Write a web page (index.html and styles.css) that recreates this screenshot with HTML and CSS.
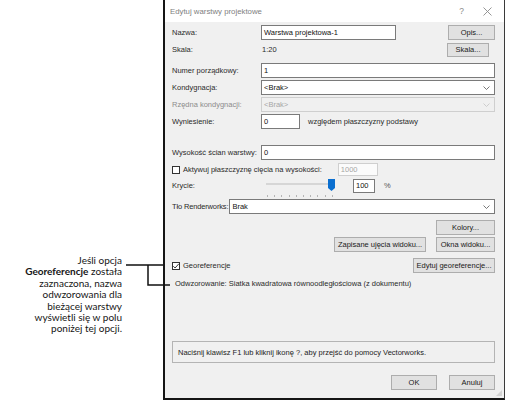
FILE: index.html
```html
<!DOCTYPE html>
<html lang="pl">
<head>
<meta charset="utf-8">
<title>Edytuj warstwy projektowe</title>
<link rel="stylesheet" href="styles.css">
</head>
<body>
<div class="page">
  <aside class="note">
    <p>Jeśli opcja<br><b>Georeferencje</b> została<br>zaznaczona, nazwa<br>odwzorowania dla<br>bieżącej warstwy<br>wyświetli się w polu<br>poniżej tej opcji.</p>
  </aside>

  <section class="dialog">
    <header class="titlebar">
      <span class="title">Edytuj warstwy projektowe</span>
      <span class="tb-help">?</span>
      <svg class="tb-close" width="9" height="9" viewBox="0 0 9 9"><path d="M0.5 0.5L8.5 8.5M8.5 0.5L0.5 8.5" stroke="#8a8a8a" stroke-width="0.9" fill="none"/></svg>
    </header>

    <div class="body">
      <div class="row r-nazwa">
        <span class="label">Nazwa:</span>
        <span class="input w-nazwa">Warstwa projektowa-1</span>
        <span class="btn b-opis">Opis...</span>
      </div>
      <div class="row r-skala">
        <span class="label">Skala:</span>
        <span class="value">1:20</span>
        <span class="btn b-skala">Skala...</span>
      </div>
      <div class="row r-numer">
        <span class="label">Numer porządkowy:</span>
        <span class="input grow">1</span>
      </div>
      <div class="row r-gap2">
        <span class="label">Kondygnacja:</span>
        <span class="input select grow">&lt;Brak&gt;<svg class="chev" width="7" height="4" viewBox="0 0 7 4"><path d="M0.5 0.5L3.5 3.5L6.5 0.5" stroke="#555" stroke-width="0.8" fill="none"/></svg></span>
      </div>
      <div class="row r-gap2 disabled">
        <span class="label">Rzędna kondygnacji:</span>
        <span class="input select off grow">&lt;Brak&gt;<svg class="chev" width="7" height="4" viewBox="0 0 7 4"><path d="M0.5 0.5L3.5 3.5L6.5 0.5" stroke="#c4c4c4" stroke-width="0.8" fill="none"/></svg></span>
      </div>
      <div class="row r-gap2">
        <span class="label">Wyniesienie:</span>
        <span class="input w-wyn">0</span>
        <span class="after">względem płaszczyzny podstawy</span>
      </div>

      <div class="row r-wys">
        <span class="label">Wysokość ścian warstwy:</span>
        <span class="input grow">0</span>
      </div>
      <div class="row r-gap2">
        <span class="check"></span>
        <span class="check-text">Aktywuj płaszczyznę cięcia na wysokości:</span>
        <span class="input off w-ciecie">1000</span>
      </div>
      <div class="row r-krycie">
        <span class="label">Krycie:</span>
        <span class="slider">
          <span class="track"></span>
          <span class="thumb"></span>
          <span class="ticks"></span>
        </span>
        <span class="input w-proc">100</span>
        <span class="pct">%</span>
      </div>
      <div class="row r-gap6">
        <span class="label l-tlo">Tło Renderworks:</span>
        <span class="input select grow">Brak<svg class="chev" width="7" height="4" viewBox="0 0 7 4"><path d="M0.5 0.5L3.5 3.5L6.5 0.5" stroke="#555" stroke-width="0.8" fill="none"/></svg></span>
      </div>
      <div class="row r-gap6 end">
        <span class="btn b-kolory">Kolory...</span>
      </div>
      <div class="row r-gap2 end">
        <span class="btn b-zapis">Zapisane ujęcia widoku...</span>
        <span class="btn b-kolory">Okna widoku...</span>
      </div>
      <div class="row r-gap6">
        <span class="check on"><svg width="8" height="8" viewBox="0 0 8 8"><path d="M1.3 4.2L3.1 6L6.8 1.8" stroke="#222" stroke-width="0.9" fill="none"/></svg></span>
        <span class="check-text">Georeferencje</span>
        <span class="btn b-edytuj">Edytuj georeferencje...</span>
      </div>
      <div class="row r-odwz">
        <span class="odwz">Odwzorowanie: Siatka kwadratowa równoodległościowa (z dokumentu)</span>
      </div>

      <div class="helpbox">Naciśnij klawisz F1 lub kliknij ikonę ?, aby przejść do pomocy Vectorworks.</div>

      <div class="row r-foot end">
        <span class="btn b-foot">OK</span>
        <span class="btn b-foot">Anuluj</span>
      </div>
      <span class="grip"></span>
    </div>
  </section>

  <svg class="callout" width="505" height="400" viewBox="0 0 505 400">
    <path d="M126 265H163M148 265V285M147.25 285H170" stroke="#111" stroke-width="1.5" fill="none"/>
  </svg>
</div>
</body>
</html>
```

FILE: styles.css
```css
* { box-sizing: border-box; }
html, body { margin: 0; padding: 0; background: #fff; }
body {
  width: 505px;
  height: 400px;
  overflow: hidden;
  font-family: "Liberation Sans", Arial, sans-serif;
}
.page {
  position: relative;
  display: flex;
  width: 505px;
  height: 400px;
}

/* annotation */
.note {
  flex: none;
  width: 163px;
  padding: 255px 41px 0 0;
  text-align: right;
  font-family: "Lato", "Noto Sans", sans-serif;
  font-size: 10px;
  line-height: 11.4px;
  color: #151515;
}
.note p { margin: 0; }
.note b { font-weight: 700; }

.callout {
  position: absolute;
  left: 0;
  top: 0;
  pointer-events: none;
}

/* dialog */
.dialog {
  flex: none;
  width: 342px;
  height: 400px;
  border-left: 2px solid #151515;
  border-right: 1px solid #3a3a3a;
  border-bottom: 2px solid #151515;
  background: #f0f0f0;
  display: flex;
  flex-direction: column;
  font-size: 7.5px;
  color: #2a2a2a;
}
.titlebar {
  flex: none;
  height: 22px;
  background: #fff;
  display: flex;
  align-items: center;
  padding: 0 12px 0 5px;
  color: #808080;
  font-size: 7.8px;
}
.title { flex: 1; }
.tb-help { margin-right: 19px; font-size: 8.5px; color: #8a8a8a; }
.tb-close { display: block; }

.body {
  position: relative;
  flex: 1;
  display: flex;
  flex-direction: column;
  padding: 3px 9px 0 7px;
}

.row {
  flex: none;
  display: flex;
  align-items: center;
  height: 15px;
  white-space: nowrap;
}
.row.end { justify-content: flex-end; }
.r-skala { margin-top: 2px; }
.r-numer { margin-top: 6px; }
.r-gap2 { margin-top: 2px; }
.r-gap6 { margin-top: 6px; }
.r-wys { margin-top: 16px; }
.r-krycie { margin-top: 1px; }
.r-odwz { margin-top: 5px; height: 10px; }
.r-foot { margin-top: 12px; gap: 12px; }

.label { flex: none; width: 89px; }
.l-tlo { width: auto; margin-right: 1px; letter-spacing: -0.15px; }
.disabled .label { color: #8c8c8c; }
.value { flex: 1; padding-left: 1px; }

.input {
  position: relative;
  display: flex;
  align-items: center;
  height: 15px;
  padding-left: 2px;
  background: #fff;
  border: 1px solid #7a7a7a;
  color: #111;
  white-space: nowrap;
}
.input.grow { flex: 1; }
.input.off { border-color: #cfcfcf; color: #a6a6a6; background: #fbfbfb; }
.select.off { background: #f0f0f0; }
.chev { position: absolute; right: 4px; top: 5px; }
.w-nazwa { width: 135px; }
.w-wyn { width: 39px; }
.w-ciecie { width: 40px; margin-left: 16px; height: 13px; }
.w-proc { width: 22px; margin-left: 16px; height: 14px; }
.after { margin-left: 8px; }
.pct { margin-left: 9px; color: #555; }

.btn {
  flex: none;
  display: flex;
  align-items: center;
  justify-content: center;
  height: 15px;
  background: #e1e1e1;
  border: 1px solid #adadad;
  color: #1a1a1a;
  white-space: nowrap;
}
.b-opis { width: 47px; margin-left: auto; }
.b-skala { width: 42px; margin-right: 6px; height: 14px; }
.b-kolory { width: 59px; }
.b-zapis { width: 92px; margin-right: 10px; }
.b-edytuj { width: 82px; margin-left: auto; }
.b-foot { width: 46px; }

.check {
  flex: none;
  width: 8px;
  height: 8px;
  border: 1px solid #333;
  background: #fff;
  margin-right: 3px;
  position: relative;
}
.check svg { position: absolute; left: -1px; top: -1px; }
.check-text { flex: none; }

/* slider */
.slider {
  position: relative;
  flex: none;
  width: 71px;
  height: 15px;
  margin-left: 5px;
}
.track {
  position: absolute;
  left: 0;
  right: 4px;
  top: 5px;
  height: 2px;
  background: #d6d6d6;
}
.thumb {
  position: absolute;
  left: 62px;
  top: 1px;
  width: 7px;
  height: 12px;
  background: #0a6fd0;
  clip-path: polygon(0 0, 100% 0, 100% 75%, 50% 100%, 0 75%);
}
.ticks {
  position: absolute;
  left: 1px;
  top: 17px;
  width: 66px;
  height: 2px;
  background: repeating-linear-gradient(to right, #b5b5b5 0 1px, transparent 1px 7.2px);
}

.odwz { padding-left: 3px; }

.helpbox {
  flex: none;
  margin-top: 53px;
  height: 22px;
  display: flex;
  align-items: center;
  padding-left: 5px;
  border: 1px solid #b4b4b4;
  color: #222;
}

.grip {
  position: absolute;
  right: 2px;
  bottom: 2px;
  width: 6px;
  height: 6px;
  background: radial-gradient(circle, #b0b0b0 0 0.6px, transparent 0.8px) 0 0 / 2px 2px;
  clip-path: polygon(100% 0, 100% 100%, 0 100%);
}
```
